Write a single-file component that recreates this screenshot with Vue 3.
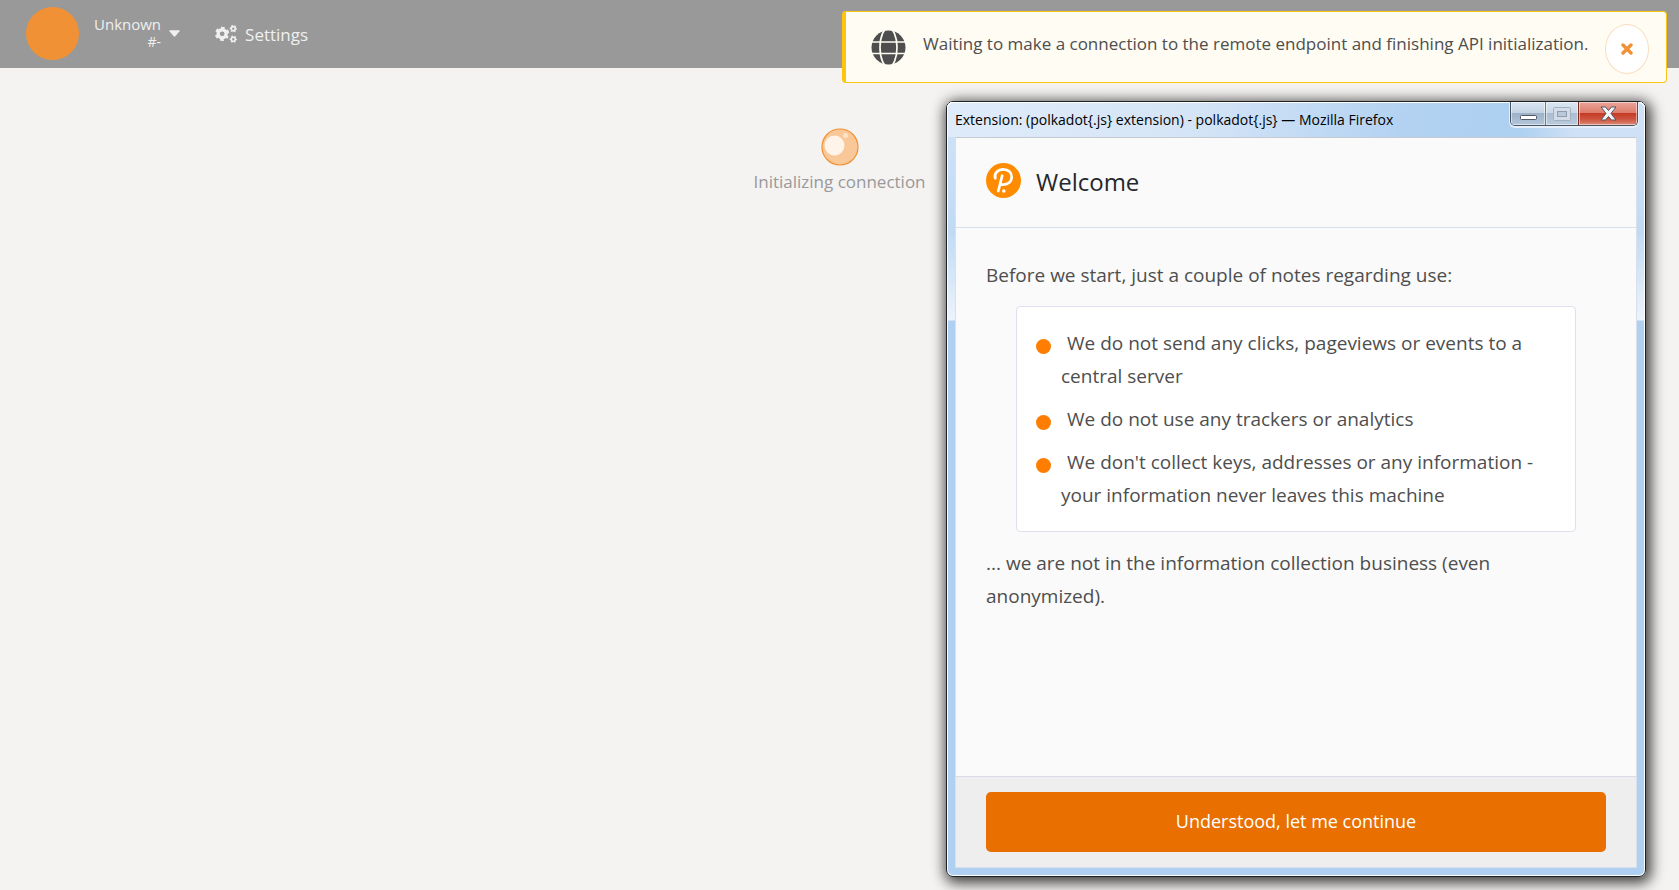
<script setup>
const notes = [
  'We do not send any clicks, pageviews or events to a central server',
  'We do not use any trackers or analytics',
  "We don't collect keys, addresses or any information - your information never leaves this machine",
]
</script>

<template>
  <div class="app">
    <header class="topbar">
      <button class="account" type="button">
        <span class="avatar"></span>
        <span class="names">
          <span class="name">Unknown</span>
          <span class="index">#-</span>
        </span>
        <svg class="caret" width="11" height="7" viewBox="0 0 11 7" aria-hidden="true">
          <path d="M1 .3h9q1 .2.5 1L6.300 6.200Q5.500 6.800 4.700 6.200L.5 1.300Q0 .5 1 .3z" fill="currentColor" />
        </svg>
      </button>
      <a class="settings" href="#">
        <svg width="22" height="18" viewBox="0 0 640 524" aria-hidden="true">
          <g fill="none" stroke="currentColor">
            <circle cx="208" cy="256" r="118" stroke-width="96" />
            <circle cx="208" cy="256" r="178" stroke-width="60" stroke-dasharray="102 84.400" stroke-dashoffset="51" transform="rotate(30 208 256)" />
            <circle cx="532" cy="106" r="58" stroke-width="46" />
            <circle cx="532" cy="106" r="88" stroke-width="36" stroke-dasharray="50 42.150" stroke-dashoffset="25" />
            <circle cx="532" cy="414" r="58" stroke-width="46" />
            <circle cx="532" cy="414" r="88" stroke-width="36" stroke-dasharray="50 42.150" stroke-dashoffset="25" />
          </g>
        </svg>
        <span>Settings</span>
      </a>
    </header>

    <main class="loading">
      <svg class="ball" width="38" height="38" viewBox="0 0 38 38" aria-hidden="true">
        <circle cx="19" cy="19" r="18" fill="#f8c899" stroke="#f19135" stroke-width="1.200" />
        <circle cx="13.500" cy="17.500" r="10" fill="#fff4ea" />
        <circle cx="24.500" cy="7.500" r="2.500" fill="#fde3ca" />
      </svg>
      <p>Initializing connection</p>
    </main>

    <aside class="toast" role="status">
      <svg class="globe" width="35" height="35" viewBox="0 0 35 35" aria-hidden="true">
        <circle cx="17.500" cy="17.500" r="17" fill="#4e4e4e" />
        <g fill="none" stroke="#fffcf3" stroke-width="1.700">
          <ellipse cx="17.500" cy="17.500" rx="8.500" ry="19.500" />
          <path d="M0 12h35M0 23.500h35" />
        </g>
      </svg>
      <p>Waiting to make a connection to the remote endpoint and finishing API initialization.</p>
      <button class="dismiss" type="button" aria-label="Dismiss">
        <svg width="12" height="12" viewBox="0 0 12 12" aria-hidden="true">
          <path d="M2 2l8 8M10 2l-8 8" stroke="#f19135" stroke-width="3.400" stroke-linecap="round" />
        </svg>
      </button>
    </aside>

    <section class="window" aria-label="polkadot{.js} extension">
      <div class="titlebar">
        <span class="title">Extension: (polkadot{.js} extension) - polkadot{.js} — Mozilla Firefox</span>
        <div class="controls">
          <button class="ctl min" type="button" aria-label="Minimize">
            <svg width="17" height="6" viewBox="0 0 17 6"><rect x=".5" y=".5" width="16" height="4" rx="1" fill="#fff" stroke="#535666" /></svg>
          </button>
          <button class="ctl max" type="button" aria-label="Maximize">
            <svg width="18" height="14" viewBox="0 0 18 14">
              <rect x=".5" y=".5" width="17" height="13" rx="1" fill="#d3dce6" stroke="#a3b0bf" />
              <rect x="4.500" y="4.500" width="9" height="5" fill="#b9c9da" stroke="#8f9dae" />
            </svg>
          </button>
          <button class="ctl close" type="button" aria-label="Close">
            <svg width="17" height="15" viewBox="0 0 17 15">
              <path d="M1 1h4.500l3 3.500 3-3.500H16l-5 6.500 5 6.500h-4.500l-3-3.500-3 3.500H1l5-6.500z" fill="#f4f4f6" stroke="#535666" stroke-linejoin="round" />
            </svg>
          </button>
        </div>
      </div>

      <div class="popup">
        <header class="head">
          <svg width="35" height="35" viewBox="0 0 35 35" aria-hidden="true">
            <circle cx="17.500" cy="17.500" r="17.500" fill="#ff8c00" />
            <path d="M9.300 15.400C7.600 10.500 12 6.300 17.300 6.300c5.100 0 8.400 3.400 8.400 7.700 0 4.700-3.700 7.700-8.200 7.700h-1.500M16.200 12.700L12.300 28" fill="none" stroke="#fff" stroke-width="2.700" stroke-linecap="round" />
            <circle cx="17.800" cy="28" r="1.800" fill="#fff" />
          </svg>
          <h1>Welcome</h1>
        </header>
        <div class="body">
          <p>Before we start, just a couple of notes regarding use:</p>
          <ul class="notes">
            <li v-for="note in notes" :key="note">{{ note }}</li>
          </ul>
          <p>... we are not in the information collection business (even anonymized).</p>
        </div>
        <footer class="foot">
          <button class="primary" type="button">Understood, let me continue</button>
        </footer>
      </div>
    </section>
  </div>
</template>

<style>
body {
  margin: 0;
  background: #f4f3f1;
}
</style>

<style scoped>
.app {
  position: relative;
  min-height: 100vh;
  overflow: hidden;
  background: #f4f3f1;
  font-family: 'Open Sans', 'Noto Sans', sans-serif;
  color: #4e4e4e;
}
p,
h1,
ul {
  margin: 0;
  padding: 0;
}
button {
  font: inherit;
  color: inherit;
  border: 0;
  padding: 0;
  background: none;
}
svg {
  display: block;
  flex: none;
}

.topbar {
  display: flex;
  align-items: center;
  gap: 35px;
  height: 68px;
  padding: 0 26px;
  background: #999;
  color: #f0f0f0;
}
.account {
  display: flex;
  align-items: center;
  margin-bottom: 2px;
}
.avatar {
  width: 53px;
  height: 53px;
  border-radius: 50%;
  background: #f19135;
}
.names {
  display: flex;
  flex-direction: column;
  margin: 0 8px 2px 15px;
  text-align: right;
}
.name {
  font-size: 15px;
  line-height: 20px;
}
.index {
  font-size: 14px;
  line-height: 16px;
}
.settings {
  display: flex;
  align-items: center;
  gap: 8px;
  color: inherit;
  font-size: 17px;
  text-decoration: none;
}

.loading {
  display: flex;
  flex-direction: column;
  align-items: center;
  padding-top: 60px;
  color: #999;
  font-size: 17px;
  line-height: 24px;
}
.loading p {
  margin-top: 4px;
}

.toast {
  position: absolute;
  top: 11px;
  right: 12px;
  display: flex;
  align-items: center;
  box-sizing: border-box;
  width: 825px;
  max-width: calc(100% - 24px);
  min-height: 72px;
  padding: 0 17px 0 25px;
  border: 1px solid #ffc40d;
  border-left-width: 4px;
  border-radius: 4px;
  background: #fffcf3;
}
.toast p {
  flex: 1;
  margin: 0 12px 6px 17px;
  font-size: 17px;
  line-height: 24px;
}
.dismiss {
  display: grid;
  place-items: center;
  width: 44px;
  height: 50px;
  margin-top: 4px;
  border: 1px solid #fbdcbd;
  border-radius: 50%;
  background: #fff;
}

.window {
  position: absolute;
  top: 101px;
  right: 33px;
  bottom: 13px;
  display: flex;
  flex-direction: column;
  box-sizing: border-box;
  width: 700px;
  max-width: calc(100% - 66px);
  padding: 0 8px 8px;
  border: 1px solid #1d2126;
  border-radius: 7px;
  background: linear-gradient(#d3e4f7 0, #c0daf4 130px, #ecf3fb 218px, #b0d0f1 219px);
  box-shadow: inset 0 0 0 1px #fff, 2px 3px 14px 3px rgba(0, 0, 0, 0.75);
}
.titlebar {
  display: flex;
  justify-content: space-between;
  height: 35px;
  margin: 0 -8px;
  padding: 0 7px 0 8px;
  border-radius: 6px 6px 0 0;
  background: linear-gradient(100deg, #dfebf9 0, #d5e5f7 35%, #b3d2f2 65%, #add0f1 82%, #cfe1f6 90%);
  box-shadow: inset 0 1px 0 #fff, inset 1px 0 0 #fff, inset -1px 0 0 #fff;
}
.title {
  color: #000;
  font-size: 14px;
  line-height: 36px;
  white-space: nowrap;
}
.controls {
  display: flex;
  height: 23px;
  border: 1px solid #4a5563;
  border-top: 0;
  border-radius: 0 0 5px 5px;
  box-shadow: 0 1px 0 1px #e4effa;
  overflow: hidden;
}
.ctl {
  display: grid;
  place-items: center;
  box-shadow: inset 0 0 0 1px rgba(255, 255, 255, 0.5);
  background: linear-gradient(#dbe6f2 0, #c3d2e2 48%, #9db2c8 50%, #b3c6da 100%);
}
.min {
  width: 34px;
  padding-top: 8px;
}
.max {
  width: 33px;
  border-left: 1px solid #6f7d8d;
  background: linear-gradient(#dbe6f2 0, #c9d7e6 48%, #abbed1 50%, #b9cbde 100%);
}
.close {
  width: 59px;
  border-left: 1px solid #7c2a20;
  background: linear-gradient(#eaa598 0, #dd7c6c 48%, #c43b26 50%, #cd5540 75%, #dd8a78 100%);
}

.popup {
  flex: 1;
  display: flex;
  flex-direction: column;
  border: 1px solid #dadfec;
  border-top-color: #c5c9d2;
  background: #fafafa;
}
.head {
  display: flex;
  align-items: center;
  gap: 15px;
  height: 89px;
  padding: 0 30px;
  border-bottom: 1px solid #dadfec;
}
.head svg {
  margin-bottom: 4px;
}
h1 {
  margin-bottom: 2px;
  color: #26272c;
  font-size: 24px;
  font-weight: 400;
  line-height: 36px;
}
.body {
  flex: 1;
  padding: 31px 30px;
  font-size: 19px;
  line-height: 33px;
}
.notes {
  margin: 14px 30px 15px;
  padding: 20px 30px 9px 44px;
  border: 1px solid #dfe0ed;
  border-radius: 4px;
  background: #fff;
  list-style: none;
}
.notes li {
  position: relative;
  margin-bottom: 10px;
  text-indent: 6px;
}
.notes li::before {
  content: '';
  position: absolute;
  top: 12px;
  left: -25px;
  width: 15px;
  height: 15px;
  border-radius: 50%;
  background: #ff7d01;
}
.foot {
  padding: 15px 30px;
  border-top: 1px solid #dadaea;
  background: #eee;
}
.primary {
  display: block;
  width: 100%;
  height: 60px;
  padding-bottom: 2px;
  border-radius: 5px;
  background: #e86f00;
  color: #fff;
  font-size: 18px;
}
</style>
